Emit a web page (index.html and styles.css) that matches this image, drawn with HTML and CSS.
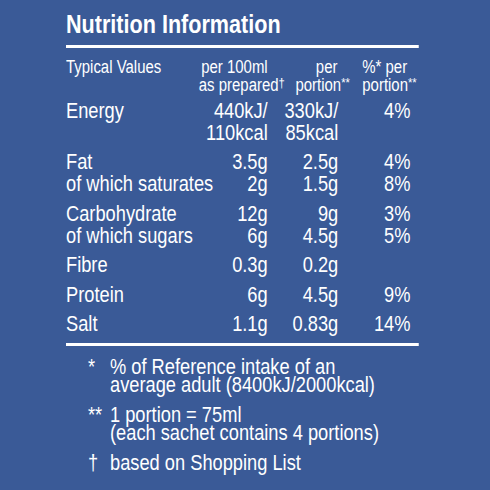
FILE: index.html
```html
<!DOCTYPE html>
<html lang="en">
<head>
  <meta charset="UTF-8" />
  <meta name="viewport" content="width=device-width, initial-scale=1.0" />
  <title>Nutrition Information</title>
  <link rel="stylesheet" href="styles.css">
</head>
<body>
  <div class="panel">
    <h1 class="title">Nutrition Information</h1>
    <hr class="rule" />

    <div class="table">
      <div class="row head">
        <div class="label">Typical Values</div>
        <div class="val">per 100ml<br />as prepared<span class="mark dagger-mark">†</span></div>
        <div class="val head-portion"><span class="per">per</span><br />portion<span class="mark">**</span></div>
        <div class="pct-head">%* per<br />portion<span class="mark">**</span></div>
      </div>

      <div class="group">
        <div class="row">
          <div class="label">Energy</div>
          <div class="val">440kJ/<br />110kcal</div>
          <div class="val">330kJ/<br />85kcal</div>
          <div class="val">4%</div>
        </div>
      </div>

      <div class="group">
        <div class="row">
          <div class="label">Fat</div>
          <div class="val">3.5g</div>
          <div class="val">2.5g</div>
          <div class="val">4%</div>
        </div>
        <div class="row">
          <div class="label">of which saturates</div>
          <div class="val">2g</div>
          <div class="val">1.5g</div>
          <div class="val">8%</div>
        </div>
      </div>

      <div class="group">
        <div class="row">
          <div class="label">Carbohydrate</div>
          <div class="val">12g</div>
          <div class="val">9g</div>
          <div class="val">3%</div>
        </div>
        <div class="row">
          <div class="label">of which sugars</div>
          <div class="val">6g</div>
          <div class="val">4.5g</div>
          <div class="val">5%</div>
        </div>
      </div>

      <div class="group">
        <div class="row">
          <div class="label">Fibre</div>
          <div class="val">0.3g</div>
          <div class="val">0.2g</div>
          <div class="val"></div>
        </div>
      </div>

      <div class="group">
        <div class="row">
          <div class="label">Protein</div>
          <div class="val">6g</div>
          <div class="val">4.5g</div>
          <div class="val">9%</div>
        </div>
      </div>

      <div class="group">
        <div class="row">
          <div class="label">Salt</div>
          <div class="val">1.1g</div>
          <div class="val">0.83g</div>
          <div class="val">14%</div>
        </div>
      </div>
    </div>

    <hr class="rule rule-bottom" />

    <div class="notes">
      <div class="note">
        <span class="sym">*</span>
        <span class="text">% of Reference intake of an<br />average adult (8400kJ/2000kcal)</span>
      </div>
      <div class="note">
        <span class="sym">**</span>
        <span class="text">1 portion = 75ml<br />(each sachet contains 4 portions)</span>
      </div>
      <div class="note">
        <span class="sym">†</span>
        <span class="text">based on Shopping List</span>
      </div>
    </div>
  </div>
</body>
</html>
```

FILE: styles.css
```css
:root {
  --panel-blue: #3a5a97;
  --ink: #ffffff;
}

body {
  margin: 0;
  background: var(--panel-blue);
  color: var(--ink);
  font-family: "Liberation Sans", Arial, sans-serif;
}

/* the label type is a condensed grotesque, so squeeze the whole panel */
.panel {
  width: 425px;
  margin-left: 66px;
  padding-top: 9px;
  transform: scaleX(0.83);
  transform-origin: 0 0;
}

.title {
  margin: 0;
  font-size: 26px;
  line-height: 30px;
  font-weight: bold;
}

.rule {
  margin: 6px 0 0;
  border: none;
  height: 3px;
  background: var(--ink);
}

.rule-bottom {
  margin-top: 8px;
}

.table {
  padding-top: 9.5px;
}

.row {
  display: grid;
  grid-template-columns: 160px 83px 85px 87px;
  font-size: 22px;
  line-height: 22px;
  white-space: nowrap;
}

.row.head {
  grid-template-columns: 160px 83px 99px auto;
  font-size: 18px;
  line-height: 18px;
  margin-bottom: 6px;
}

.group {
  margin-bottom: 7.5px;
}

.group:last-child {
  margin-bottom: 0;
}

.label {
  text-align: left;
}

.val {
  text-align: right;
}

.mark {
  font-size: 0.75em;
  vertical-align: top;
  line-height: 1;
}

.dagger-mark {
  margin-right: -6px;
}

.head-portion .per {
  padding-right: 15px;
}

.pct-head {
  padding-left: 15px;
}

.notes {
  padding: 12px 0 0 26.5px;
  font-size: 22px;
  line-height: 18px;
}

.note {
  display: flex;
  margin-bottom: 12px;
}

.sym {
  width: 26.5px;
  flex: none;
}
```
